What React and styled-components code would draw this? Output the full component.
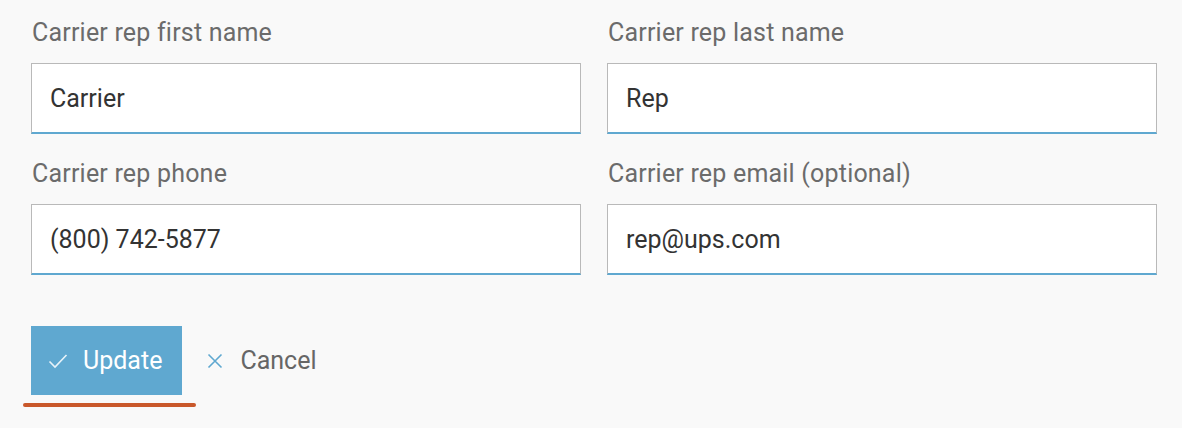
import React from 'react'
import styled, { createGlobalStyle } from 'styled-components'

const GlobalStyle = createGlobalStyle`
body {
  margin: 0;
  background: #f9f9f9;
  font-family: Roboto, "Liberation Sans", sans-serif;
}
`
const Form = styled.form`
display: flex;
flex-direction: column;
padding: 18px 25px 0 31px;
`
const Grid = styled.div`
display: grid;
grid-template-columns: 550px 550px;
column-gap: 26px;
row-gap: 25px;
`
const Field = styled.label`
display: flex;
flex-direction: column;
gap: 15px;
`
const Label = styled.span`
font-size: 25px;
line-height: 30px;
color: #6b6b6b;
padding-left: 1px;
letter-spacing: 0.2px;
`
const Input = styled.input`
box-sizing: border-box;
height: 71px;
width: 100%;
padding: 0 18px;
background: #fff;
border: 1.5px solid #b9b9b9;
border-bottom: 2px solid #5fa8d0;
border-radius: 0;
font-family: inherit;
font-size: 25px;
color: #333;
outline: none;
`
const Actions = styled.div`
display: flex;
align-items: center;
gap: 25px;
margin-top: 51px;
`
const PrimaryButton = styled.button`
display: flex;
align-items: center;
gap: 15px;
height: 69px;
padding: 0 20px 0 17px;
border: none;
background: #5fa8d0;
color: #fff;
font-family: inherit;
font-size: 25px;
cursor: pointer;
`
const LinkButton = styled.button`
display: flex;
align-items: center;
gap: 17px;
padding: 0;
border: none;
background: transparent;
color: #666;
font-family: inherit;
font-size: 25px;
cursor: pointer;
`
const Underline = styled.div`
width: 173px;
height: 4px;
margin: 8px 0 0 -8px;
border-radius: 2px;
background: #c9582b;
`

const Check = () => (
  <svg width="20" height="16" viewBox="0 0 20 16" fill="none">
    <path d="M1.5 8.5 L7 14 L18.5 2" stroke="#e8f3f9" strokeWidth="1.6" />
  </svg>
)

const Cross = () => (
  <svg width="16" height="16" viewBox="0 0 16 16" fill="none">
    <path d="M1.5 1.5 L14.5 14.5 M14.5 1.5 L1.5 14.5" stroke="#5fa8d0" strokeWidth="1.6" />
  </svg>
)

const fields = [
  { label: 'Carrier rep first name', value: 'Carrier' },
  { label: 'Carrier rep last name', value: 'Rep' },
  { label: 'Carrier rep phone', value: '(800) 742-5877' },
  { label: 'Carrier rep email (optional)', value: 'rep@ups.com' },
]

const App = () => {
  return (
    <>
      <GlobalStyle />
      <Form onSubmit={e => e.preventDefault()}>
        <Grid>
          {fields.map(f => (
            <Field key={f.label}>
              <Label>{f.label}</Label>
              <Input defaultValue={f.value} />
            </Field>
          ))}
        </Grid>
        <Actions>
          <PrimaryButton type="submit"><Check />Update</PrimaryButton>
          <LinkButton type="button"><Cross />Cancel</LinkButton>
        </Actions>
        <Underline />
      </Form>
    </>
  )
}

export default App
